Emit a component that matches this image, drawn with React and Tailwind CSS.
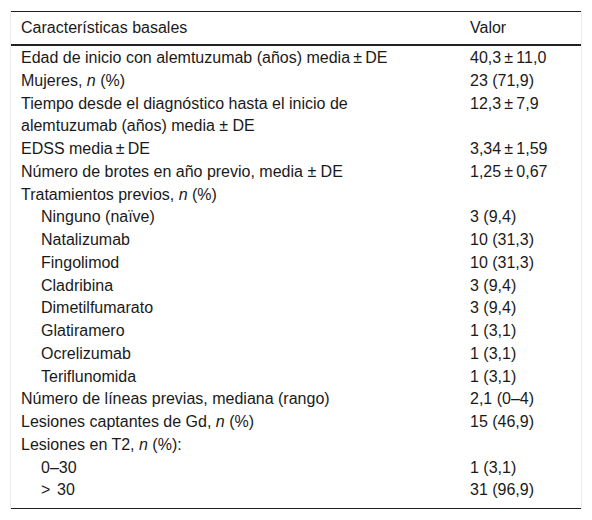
import React from "react";

const rows = [
  { l: "Edad de inicio con alemtuzumab (años) media\u2009±\u2009DE", v: "40,3\u2009±\u200911,0" },
  { l: <>Mujeres, <i>n</i> (%)</>, v: "23 (71,9)" },
  { l: "Tiempo desde el diagnóstico hasta el inicio de alemtuzumab (años) media ± DE", v: "12,3\u2009±\u20097,9" },
  { l: "EDSS media\u2009±\u2009DE", v: "3,34\u2009±\u20091,59" },
  { l: "Número de brotes en año previo, media ± DE", v: "1,25\u2009±\u20090,67" },
  { l: <>Tratamientos previos, <i>n</i> (%)</>, v: "" },
  { l: "Ninguno (naïve)", v: "3 (9,4)", ind: true },
  { l: "Natalizumab", v: "10 (31,3)", ind: true },
  { l: "Fingolimod", v: "10 (31,3)", ind: true },
  { l: "Cladribina", v: "3 (9,4)", ind: true },
  { l: "Dimetilfumarato", v: "3 (9,4)", ind: true },
  { l: "Glatiramero", v: "1 (3,1)", ind: true },
  { l: "Ocrelizumab", v: "1 (3,1)", ind: true },
  { l: "Teriflunomida", v: "1 (3,1)", ind: true },
  { l: "Número de líneas previas, mediana (rango)", v: "2,1 (0–4)" },
  { l: <>Lesiones captantes de Gd, <i>n</i> (%)</>, v: "15 (46,9)" },
  { l: <>Lesiones en T2, <i>n</i> (%):</>, v: "" },
  { l: "0–30", v: "1 (3,1)", ind: true },
  { l: <><span className="inline-block w-[16px]">&gt;</span><span>30</span></>, v: "31 (96,9)", ind: true },
];

export default function App() {
  return (
    <div className="w-[592px] h-[520px] bg-white pt-[11px] px-[10px] text-[16px] text-[#1a1a1a] font-['Liberation_Sans',Arial,sans-serif]">
      <div className="border-x border-[#ececec]">
        <table className="w-full border-collapse">
          <colgroup>
            <col className="w-[459px]" />
            <col />
          </colgroup>
          <thead>
            <tr className="border-t border-b-2 border-[#222]">
              <th className="text-left font-normal pl-[10px] pr-[30px] py-[5px] leading-[22px]">Características basales</th>
              <th className="text-left font-normal py-[5px] leading-[22px]">Valor</th>
            </tr>
          </thead>
          <tbody className="border-b border-[#222]">
            {rows.map((r, i) => (
              <tr key={i}>
                <td className={`${r.ind ? "pl-[30px]" : "pl-[10px]"} pr-[30px] leading-[22.75px] align-top ${i === 0 ? "pt-[1px]" : ""} ${i === rows.length - 1 ? "pb-[6px]" : ""}`}>{r.l}</td>
                <td className={`leading-[22.75px] align-top ${i === 0 ? "pt-[1px]" : ""} ${i === rows.length - 1 ? "pb-[6px]" : ""}`}>{r.v}</td>
              </tr>
            ))}
          </tbody>
        </table>
      </div>
    </div>
  );
}
